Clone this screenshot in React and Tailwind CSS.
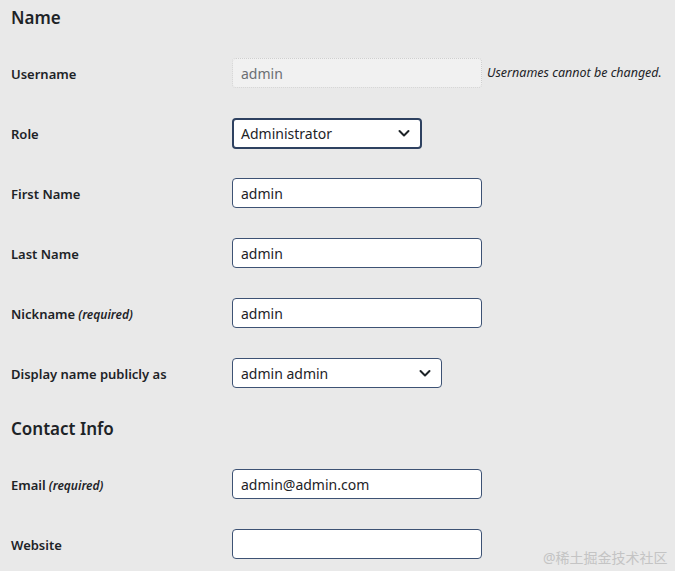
import React from "react";

const Chevron = () => (
  <svg width="14" height="14" viewBox="0 0 14 14" fill="none" className="absolute right-[9px] top-1/2 -translate-y-1/2">
    <path d="M2.5 5l4.5 4.5L11.5 5" stroke="#1d2327" strokeWidth="2" strokeLinecap="round" strokeLinejoin="round" />
  </svg>
);

const Row = ({ label, req, children }) => (
  <div className="flex h-[60px] items-center">
    <div className="w-[221px] shrink-0 pt-[3px] text-[13px] font-semibold text-[#1d2327]">
      {label}
      {req && <span className="font-semibold italic text-[12px]"> (required)</span>}
    </div>
    <div className="flex items-center">{children}</div>
  </div>
);

const Input = ({ value, w = "w-[250px]" }) => (
  <div className={`${w} h-[30px] rounded-[4px] border border-[#3d5274] bg-white px-[8px] flex items-center text-[14px] text-[#1d2327]`}>
    {value}
  </div>
);

const Heading = ({ children }) => (
  <div className="h-[36px] flex items-center text-[17px] font-semibold text-[#1d2327]">{children}</div>
);

export default function App() {
  return (
    <div
      className="relative w-[675px] h-[571px] overflow-hidden bg-[#e9e9e9] px-[11px]"
      style={{ fontFamily: '"Noto Sans", "Noto Sans CJK SC", sans-serif' }}
    >
      <Heading>Name</Heading>
      <div className="mt-[7px]">
        <Row label="Username">
          <div className="w-[250px] h-[30px] rounded-[4px] border border-dotted border-[#cfcfcf] bg-[#f1f1f1] px-[8px] flex items-center text-[14px] text-[#6b6f73]">
            admin
          </div>
          <span className="ml-[5px] text-[12.5px] italic text-[#1d2327]">Usernames cannot be changed.</span>
        </Row>
        <Row label="Role">
          <div className="relative w-[190px] h-[31px] rounded-[4px] border-2 border-[#2e4160] bg-white px-[7px] flex items-center text-[14px] text-[#1d2327]">
            Administrator
            <Chevron />
          </div>
        </Row>
        <Row label="First Name">
          <Input value="admin" />
        </Row>
        <Row label="Last Name">
          <Input value="admin" />
        </Row>
        <Row label="Nickname" req>
          <Input value="admin" />
        </Row>
        <Row label="Display name publicly as">
          <div className="relative w-[210px] h-[30px] rounded-[4px] border border-[#3d5274] bg-white px-[8px] flex items-center text-[14px] text-[#1d2327]">
            admin admin
            <Chevron />
          </div>
        </Row>
      </div>
      <div className="mt-[8px]">
        <Heading>Contact Info</Heading>
      </div>
      <div className="mt-[7px]">
        <Row label="Email" req>
          <Input value="admin@admin.com" />
        </Row>
        <Row label="Website">
          <Input value="" />
        </Row>
      </div>
      <div className="absolute left-[543px] top-[547px] text-[14px] text-[#c4c4c4] tracking-[0px]">
        @稀土掘金技术社区
      </div>
    </div>
  );
}
